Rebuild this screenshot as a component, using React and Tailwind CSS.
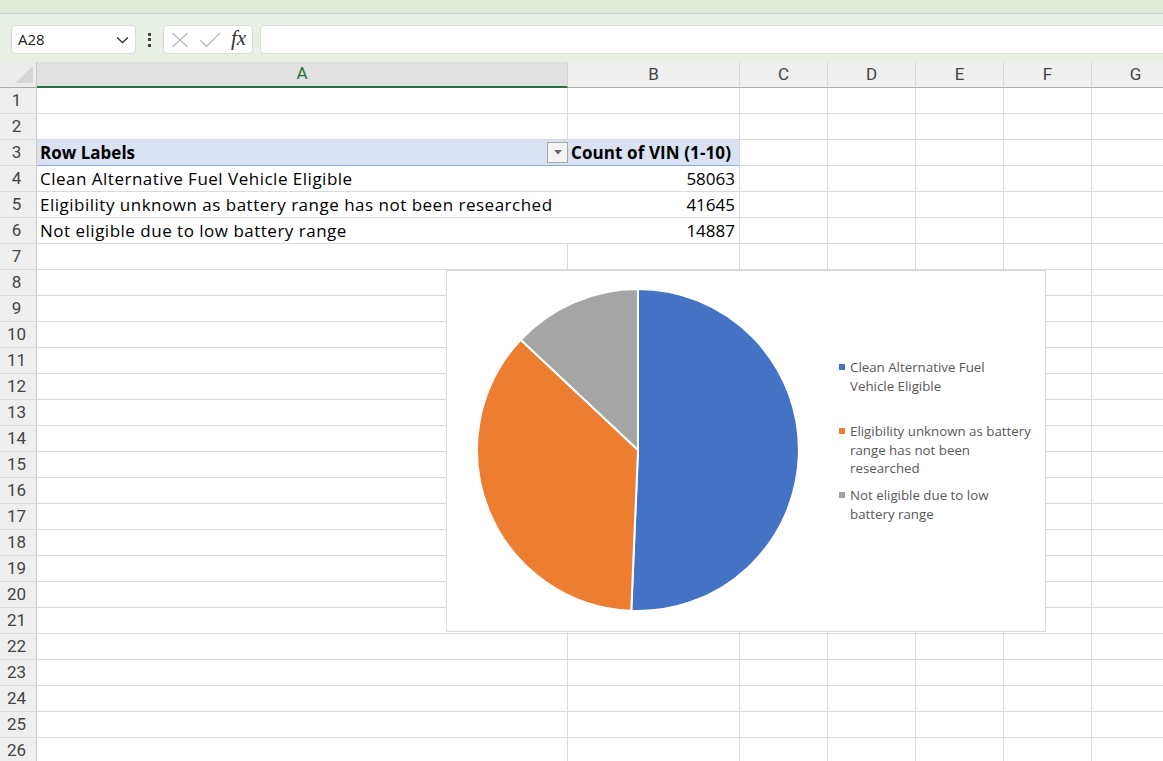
import React from "react";

const COLS = [
  { key: "A", w: "w-[531px]" },
  { key: "B", w: "w-[172px]" },
  { key: "C", w: "w-[88px]" },
  { key: "D", w: "w-[88px]" },
  { key: "E", w: "w-[88px]" },
  { key: "F", w: "w-[88px]" },
  { key: "G", w: "w-[88px]" },
];

const CELL_FONT = { fontFamily: '"Open Sans", "Noto Sans", sans-serif' };
const HDR_FONT = { fontFamily: 'Roboto, "Noto Sans", sans-serif' };

function slicePath(cx, cy, r, a0, a1) {
  const rad = (a) => (a * Math.PI) / 180;
  const x0 = cx + r * Math.sin(rad(a0));
  const y0 = cy - r * Math.cos(rad(a0));
  const x1 = cx + r * Math.sin(rad(a1));
  const y1 = cy - r * Math.cos(rad(a1));
  const large = a1 - a0 > 180 ? 1 : 0;
  return `M${cx},${cy} L${x0.toFixed(2)},${y0.toFixed(2)} A${r},${r} 0 ${large} 1 ${x1.toFixed(2)},${y1.toFixed(2)} Z`;
}

const DATA = [
  { label: ["Clean Alternative Fuel", "Vehicle Eligible"], value: 58063, color: "#4472c4" },
  { label: ["Eligibility unknown as battery", "range has not been", "researched"], value: 41645, color: "#ed7d31" },
  { label: ["Not eligible due to low", "battery range"], value: 14887, color: "#a5a5a5" },
];

function Pie() {
  const total = DATA.reduce((s, d) => s + d.value, 0);
  let acc = 0;
  return (
    <svg width="382" height="360" viewBox="0 0 382 360" className="shrink-0">
      {DATA.map((d, i) => {
        const a0 = (acc / total) * 360;
        acc += d.value;
        const a1 = (acc / total) * 360;
        return (
          <path
            key={i}
            d={slicePath(191, 179, 161, a0, a1)}
            fill={d.color}
            stroke="#ffffff"
            strokeWidth="2"
            strokeLinejoin="round"
          />
        );
      })}
    </svg>
  );
}

function Chart() {
  return (
    <div className="absolute left-[446px] top-[270px] w-[600px] h-[362px] bg-white border border-[#d9d9d9] flex">
      <Pie />
      <div
        className="pl-[10px] pt-[87px] flex flex-col text-[13.3px] leading-[18.5px] text-[#595959]"
        style={{ fontFamily: '"Open Sans", "Noto Sans", sans-serif' }}
      >
        {DATA.map((d, i) => (
          <div key={i} className="h-[64px] flex items-start gap-[5px]">
            <div className="w-[6px] h-[6px] mt-[6px] shrink-0" style={{ backgroundColor: d.color }} />
            <div className="whitespace-nowrap">
              {d.label.map((l, j) => (
                <div key={j}>{l}</div>
              ))}
            </div>
          </div>
        ))}
      </div>
    </div>
  );
}

function FormulaBar() {
  return (
    <>
      <div className="h-[14px] bg-[#e1ead9] border-b border-[#ccd3c8]" />
      <div className="h-[48px] bg-[#e8efe4] flex items-start pt-[11px] overflow-hidden">
        <div className="ml-[11px] w-[125px] h-[29px] shrink-0 bg-white rounded-[4px] border border-[#d8dcd5] flex items-center justify-between pl-[6px] pr-[6px]">
          <span className="text-[15px] text-[#222]" style={{ fontFamily: '"Open Sans", "Noto Sans", sans-serif' }}>
            A28
          </span>
          <svg width="13" height="8" viewBox="0 0 13 8">
            <polyline points="1,1.5 6.5,6.5 12,1.5" fill="none" stroke="#333" strokeWidth="1.3" />
          </svg>
        </div>
        <div className="w-[27px] h-[29px] shrink-0 flex flex-col items-center justify-center gap-[2.5px]">
          <div className="w-[3px] h-[3px] bg-[#444]" />
          <div className="w-[3px] h-[3px] bg-[#444]" />
          <div className="w-[3px] h-[3px] bg-[#444]" />
        </div>
        <div className="w-[90px] h-[29px] shrink-0 bg-white rounded-[4px] border border-[#d8dcd5] flex items-center pl-[6px]">
          <svg width="18" height="16" viewBox="0 0 18 16" className="ml-[1px]">
            <path d="M1.5 1 L16.5 15 M16.5 1 L1.5 15" stroke="#b8b8b8" strokeWidth="1.3" fill="none" />
          </svg>
          <svg width="22" height="16" viewBox="0 0 22 16" className="ml-[10px]">
            <polyline points="1,8 7.5,14.5 21,1" stroke="#b8b8b8" strokeWidth="1.3" fill="none" />
          </svg>
          <span
            className="ml-[10px] text-[21px] italic text-[#333] leading-none -mt-[3px]"
            style={{ fontFamily: '"Liberation Serif", "DejaVu Serif", serif' }}
          >
            fx
          </span>
        </div>
        <div className="ml-[7px] w-[920px] h-[29px] shrink-0 bg-white rounded-l-[4px] border border-[#d8dcd5]" />
      </div>
    </>
  );
}

function HeaderRow() {
  return (
    <div className="flex h-[26px]" style={HDR_FONT}>
      <div className="w-[37px] h-full bg-[#ececec] border-r border-[#c8c8c8] border-b border-b-[#ababab] relative shrink-0">
        <svg width="19" height="18" viewBox="0 0 19 18" className="absolute left-[15px] top-[4px]">
          <polygon points="18,0 18,17 0,17" fill="#d6d6d6" />
        </svg>
      </div>
      {COLS.map((c) =>
        c.key === "A" ? (
          <div
            key={c.key}
            className={`${c.w} shrink-0 h-full bg-[#e1e1e1] border-b-2 border-[#217346] border-r border-r-[#d4d4d4] flex items-center justify-center text-[17px] text-[#1e7145]`}
          >
            A
          </div>
        ) : (
          <div
            key={c.key}
            className={`${c.w} shrink-0 h-full bg-[#efefef] border-b border-[#ababab] border-r border-r-[#d8d8d8] flex items-center justify-center text-[17px] text-[#444]`}
          >
            {c.key}
          </div>
        )
      )}
    </div>
  );
}

function Row({ n }) {
  const isPivotHead = n === 3;
  const isPivotBody = n >= 4 && n <= 6;
  const bodyLabels = {
    4: ["Clean Alternative Fuel Vehicle Eligible", "58063"],
    5: ["Eligibility unknown as battery range has not been researched", "41645"],
    6: ["Not eligible due to low battery range", "14887"],
  };
  return (
    <div className="flex h-[26px]">
      <div
        className="w-[37px] shrink-0 h-full bg-[#efefef] border-r border-[#c8c8c8] border-b border-b-[#dcdcdc] flex items-center justify-center pr-[3px] text-[17px] text-[#444]"
        style={HDR_FONT}
      >
        {n}
      </div>
      {COLS.map((c) => {
        if (c.key === "A" && isPivotHead) {
          return (
            <div
              key={c.key}
              className={`${c.w} shrink-0 h-full bg-[#d9e1f2] border-b border-[#8ea9db] flex items-center pl-[3px] relative text-[17px] font-bold text-black`}
              style={CELL_FONT}
            >
              Row Labels
              <div className="absolute right-0 top-[2px] w-[21px] h-[21px] bg-[#f4f4f4] border border-[#a6a6a6] flex items-center justify-center">
                <svg width="8" height="5" viewBox="0 0 8 5">
                  <polygon points="0,0 8,0 4,4.5" fill="#666" />
                </svg>
              </div>
            </div>
          );
        }
        if (c.key === "B" && isPivotHead) {
          return (
            <div
              key={c.key}
              className={`${c.w} shrink-0 h-full bg-[#d9e1f2] border-b border-[#8ea9db] border-r border-r-[#dadada] flex items-center pl-[3px] text-[17px] font-bold text-black whitespace-nowrap tracking-[0.1px]`}
              style={CELL_FONT}
            >
              Count of VIN (1-10)
            </div>
          );
        }
        if (c.key === "A" && isPivotBody) {
          return (
            <div
              key={c.key}
              className={`${c.w} shrink-0 h-full border-b border-[#dadada] flex items-center pl-[3px] text-[17px] text-black whitespace-nowrap tracking-[0.5px]`}
              style={CELL_FONT}
            >
              {bodyLabels[n][0]}
            </div>
          );
        }
        if (c.key === "B" && isPivotBody) {
          return (
            <div
              key={c.key}
              className={`${c.w} shrink-0 h-full border-b border-r border-[#dadada] flex items-center justify-end pr-[4px] text-[17px] text-black`}
              style={CELL_FONT}
            >
              {bodyLabels[n][1]}
            </div>
          );
        }
        return <div key={c.key} className={`${c.w} shrink-0 h-full border-b border-r border-[#dadada]`} />;
      })}
    </div>
  );
}

export default function App() {
  const rows = Array.from({ length: 27 }, (_, i) => i + 1);
  return (
    <div className="w-[1163px] h-[761px] overflow-hidden relative bg-white">
      <FormulaBar />
      <HeaderRow />
      {rows.map((n) => (
        <Row key={n} n={n} />
      ))}
      <Chart />
    </div>
  );
}
